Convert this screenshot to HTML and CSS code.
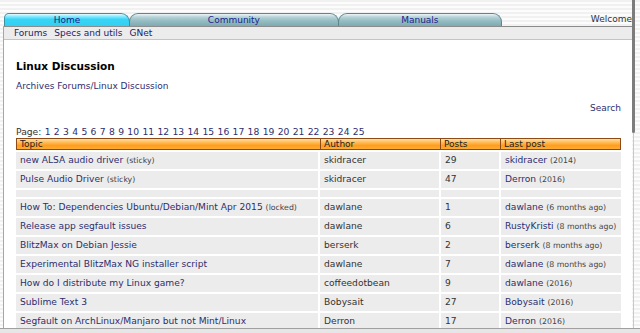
FILE: index.html
```html
<!DOCTYPE html>
<html>
<head>
<meta charset="utf-8">
<link rel="stylesheet" href="styles.css">
</head>
<body>
<div class="window">
  <div class="main">
    <div class="tabbar">
      <div class="tab tab-home">Home</div>
      <div class="tab tab-community">Community</div>
      <div class="tab tab-manuals">Manuals</div>
      <div class="welcome">Welcome</div>
    </div>
    <div class="frame">
      <div class="subnav">
        <a>Forums</a><a>Specs and utils</a><a>GNet</a>
      </div>
      <div class="content">
        <h1 class="title">Linux Discussion</h1>
        <div class="crumbs"><a>Archives Forums</a>/<a>Linux Discussion</a></div>
        <div class="search"><a>Search</a></div>
        <div class="pages">Page: <a>1</a> <a>2</a> <a>3</a> <a>4</a> <a>5</a> <a>6</a> <a>7</a> <a>8</a> <a>9</a> <a>10</a> <a>11</a> <a>12</a> <a>13</a> <a>14</a> <a>15</a> <a>16</a> <a>17</a> <a>18</a> <a>19</a> <a>20</a> <a>21</a> <a>22</a> <a>23</a> <a>24</a> <a>25</a></div>
        <div class="grid">
          <div class="thead">
            <div class="th">Topic</div><div class="th">Author</div><div class="th">Posts</div><div class="th">Last post</div>
          </div>
          <div class="row"><div class="td"><a>new ALSA audio driver</a> <small>(sticky)</small></div><div class="td">skidracer</div><div class="td">29</div><div class="td"><a>skidracer</a> <small>(2014)</small></div></div>
          <div class="row"><div class="td"><a>Pulse Audio Driver</a> <small>(sticky)</small></div><div class="td">skidracer</div><div class="td">47</div><div class="td"><a>Derron</a> <small>(2016)</small></div></div>
          <div class="row spacer"><div class="td"></div><div class="td"></div><div class="td"></div><div class="td"></div></div>
          <div class="row"><div class="td"><a>How To: Dependencies Ubuntu/Debian/Mint Apr 2015</a> <small>(locked)</small></div><div class="td">dawlane</div><div class="td">1</div><div class="td"><a>dawlane</a> <small>(6 months ago)</small></div></div>
          <div class="row"><div class="td"><a>Release app segfault issues</a></div><div class="td">dawlane</div><div class="td">6</div><div class="td"><a>RustyKristi</a> <small>(8 months ago)</small></div></div>
          <div class="row"><div class="td"><a>BlitzMax on Debian Jessie</a></div><div class="td">berserk</div><div class="td">2</div><div class="td"><a>berserk</a> <small>(8 months ago)</small></div></div>
          <div class="row"><div class="td"><a>Experimental BlitzMax NG installer script</a></div><div class="td">dawlane</div><div class="td">7</div><div class="td"><a>dawlane</a> <small>(8 months ago)</small></div></div>
          <div class="row"><div class="td"><a>How do I distribute my Linux game?</a></div><div class="td">coffeedotbean</div><div class="td">9</div><div class="td"><a>dawlane</a> <small>(2016)</small></div></div>
          <div class="row"><div class="td"><a>Sublime Text 3</a></div><div class="td">Bobysait</div><div class="td">27</div><div class="td"><a>Bobysait</a> <small>(2016)</small></div></div>
          <div class="row"><div class="td"><a>Segfault on ArchLinux/Manjaro but not Mint/Linux</a></div><div class="td">Derron</div><div class="td">17</div><div class="td"><a>Derron</a> <small>(2016)</small></div></div>
        </div>
      </div>
    </div>
  </div>
  <div class="scroll"><div class="thumb"></div><div class="track"></div></div>
</div>
<div class="statusbar"></div>
</body>
</html>
```
FILE: styles.css
```css
html, body {
  margin: 0;
  padding: 0;
}
body {
  width: 640px;
  height: 333px;
  overflow: hidden;
  font-family: "DejaVu Sans", Verdana, sans-serif;
  font-size: 9px;
  color: #333;
  background: repeating-linear-gradient(180deg, #f1f1f1 0, #f1f1f1 2px, #fcfcfc 2px, #fcfcfc 4px);
}
a { color: #2e2e6e; text-decoration: none; }
.window {
  display: flex;
  height: 328px;
}
.main {
  width: 632px;
  height: 328px;
  overflow: hidden;
  display: flex;
  flex-direction: column;
}
.tabbar {
  display: flex;
  align-items: flex-end;
  height: 13px;
  padding-top: 13px;
  padding-left: 4px;
  white-space: nowrap;
}
.tab {
  box-sizing: border-box;
  height: 13px;
  line-height: 12px;
  text-align: center;
  color: #1e1e8a;
  font-size: 9px;
  border: 1px solid #5d858c;
  border-bottom: none;
}
.tab-home {
  width: 126px;
  border-radius: 5px 9px 0 0;
  border-color: #3f8fa3;
  background: linear-gradient(180deg, #e6fcff 0, #86eaff 20%, #36d4f6 45%, #34d0f2 100%);
  position: relative;
  z-index: 2;
}
.tab-community {
  width: 210px;
  margin-left: -1px;
  border-radius: 9px 9px 0 0;
  background: linear-gradient(180deg, #eef6f6 0, #b6d3d8 25%, #96bec4 55%, #7eaab1 100%);
}
.tab-manuals {
  width: 164px;
  margin-left: -1px;
  border-radius: 9px 9px 0 0;
  background: linear-gradient(180deg, #eef6f6 0, #b6d3d8 25%, #96bec4 55%, #7eaab1 100%);
}
.welcome {
  margin-left: 89px;
  line-height: 13px;
  color: #333;
  align-self: center;
}
.frame {
  flex: 1;
  margin-left: 3px;
  border-left: 1px solid #a6a6a6;
  background: #fff;
  display: flex;
  flex-direction: column;
}
.subnav {
  height: 12px;
  line-height: 12px;
  border-top: 1px solid #8c8c8c;
  border-bottom: 1px solid #c4c4c4;
  background: #ececec;
  padding-left: 10px;
  display: flex;
  gap: 7px;
}
.subnav a { color: #22226a; }
.content {
  padding: 20px 11px 0 12px;
}
.title {
  margin: 0;
  font-size: 10.5px;
  line-height: 13px;
  font-weight: bold;
  color: #000;
}
.crumbs {
  margin-top: 7px;
  line-height: 12px;
  color: #2e2e6e;
}
.search {
  margin-top: 10px;
  line-height: 12px;
  text-align: right;
}
.pages {
  margin-top: 12px;
  line-height: 12px;
  color: #333;
  white-space: nowrap;
  font-size: 9.2px;
  word-spacing: 0.4px;
}
.grid {
  width: 605px;
}
.thead {
  display: grid;
  grid-template-columns: 304px 120px 60px 1fr;
  height: 10px;
  border: 1px solid #8e4b16;
  background: linear-gradient(180deg, #ffe2a8 0, #ffbf5e 30%, #ff9e1e 65%, #ffaa33 100%);
}
.th {
  line-height: 11px;
  padding-left: 3px;
  color: #222;
  border-right: 1px solid #8e4b16;
}
.th:last-child { border-right: none; }
.row {
  display: grid;
  grid-template-columns: 302px 119px 58px 1fr;
  column-gap: 2px;
  margin-top: 2px;
  height: 17px;
}
.row.spacer { height: 7px; }
.td {
  background: #ececec;
  line-height: 17px;
  padding-left: 4px;
  white-space: nowrap;
  overflow: hidden;
  color: #333;
  font-size: 9.15px;
}
.td small {
  font-size: 7.8px;
  color: #444;
}
.scroll {
  width: 8px;
}
.thumb {
  width: 3px;
  height: 133px;
  background: #7c7c7c;
  border-radius: 0 0 2px 2px;
}
.track {
  width: 1px;
  height: 195px;
  margin-left: 1px;
  background: #c8c8c8;
}
.statusbar {
  height: 4px;
  border-top: 1px solid #a0a0a0;
  background: #e6e6e6;
}
```
